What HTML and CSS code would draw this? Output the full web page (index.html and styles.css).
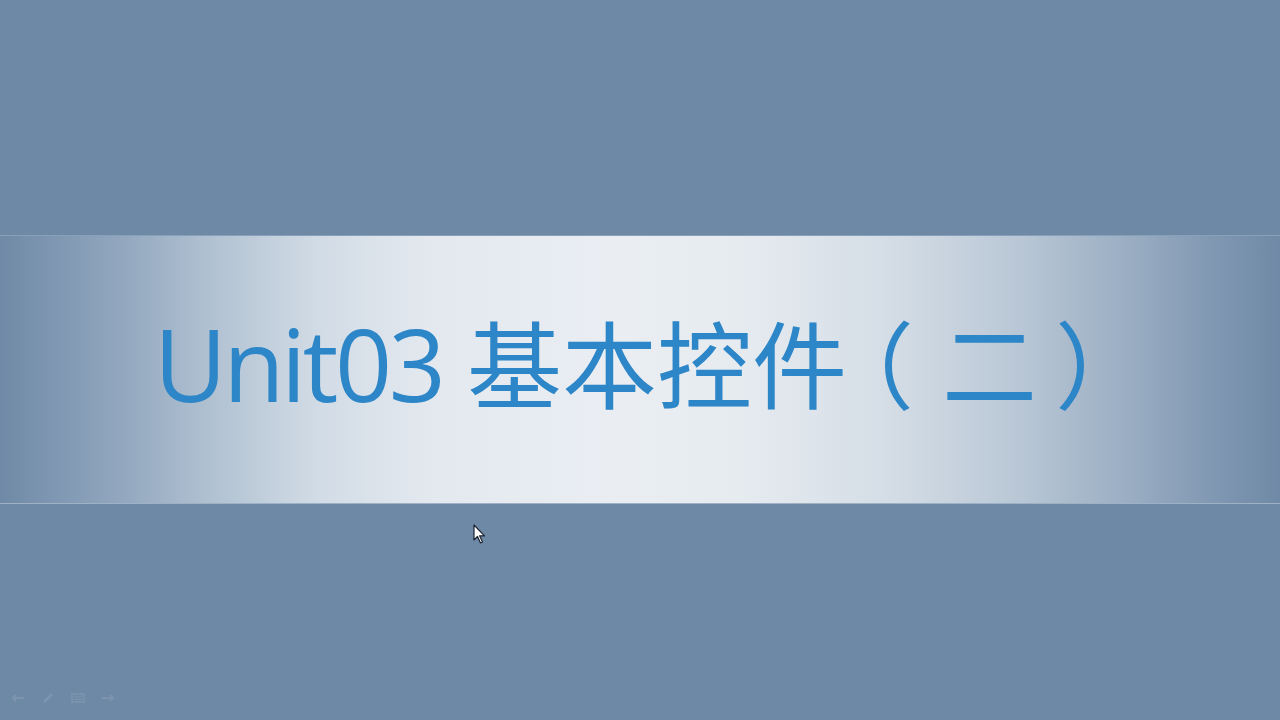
FILE: index.html
```html
<html>
<meta http-equiv="Content-Type" content="text/html; charset=utf-8" />

<head>
    <link rel="stylesheet" href="styles.css">
</head>

<body>
    <div id="slide">
        <div class="band">
            <h1 class="title"><span class="lat">Unit03</span> 基本控<span class="tight">件</span><span class="pl">（</span>二<span class="pr">）</span></h1>
        </div>

        <!-- 鼠标指针 -->
        <svg class="cursor" width="14" height="20" viewBox="0 0 14 20">
            <path d="M1 1 L1 16 L4.5 12.5 L7.5 19 L9.5 18 L6.6 11.8 L11.5 11.8 Z" fill="#fff" stroke="#1c2430" stroke-width="1.2" stroke-linejoin="round" />
        </svg>

        <!-- 放映工具栏 -->
        <div class="toolbar">
            <svg width="16" height="10" viewBox="0 0 16 10"><path d="M14 5 L3 5 M6 2 L3 5 L6 8" stroke="#8ea3bb" stroke-width="2" fill="none" /></svg>
            <svg width="16" height="10" viewBox="0 0 16 10"><path d="M4 9 L12 1" stroke="#8ea3bb" stroke-width="2.5" fill="none" /></svg>
            <svg width="16" height="10" viewBox="0 0 16 10"><rect x="2" y="1" width="12" height="8" fill="none" stroke="#8ea3bb" stroke-width="1.5" /><path d="M4 4 L12 4 M4 6.5 L12 6.5" stroke="#8ea3bb" stroke-width="1" /></svg>
            <svg width="16" height="10" viewBox="0 0 16 10"><path d="M2 5 L13 5 M10 2 L13 5 L10 8" stroke="#8ea3bb" stroke-width="2" fill="none" /></svg>
        </div>
    </div>
</body>

</html>
```

FILE: styles.css
```css
body,
div,
h1 {
    margin: 0px;
    padding: 0px;
}

body {
    background: #6e89a6;
    font-family: "Open Sans", "Noto Sans CJK SC", sans-serif;
    overflow: hidden;
}

#slide {
    width: 1280px;
    height: 720px;
    position: relative;
    padding-top: 235px;
    box-sizing: border-box;
}

.band {
    height: 269px;
    display: flex;
    align-items: center;
    justify-content: center;
    background: linear-gradient(to right,
        #6f89a6 0%,
        #7e96b1 4%,
        #94a9c0 10%,
        #b3c3d3 17%,
        #d2dce6 25%,
        #e4e9ef 34%,
        #eaeef3 48%,
        #e6ebf0 58%,
        #d3dce5 70%,
        #b8c6d5 80%,
        #97abc1 89%,
        #7c94af 96%,
        #6f89a6 100%);
    border-top: 1px solid #8aa0b8;
    border-bottom: 1px solid #9fb2c5;
    box-sizing: border-box;
}

.title {
    font-weight: normal;
    font-size: 95px;
    color: #2d86c7;
    line-height: 1;
    white-space: nowrap;
    padding-bottom: 13px;
    padding-left: 24px;
}

.title .lat {
    font-size: 100px;
    letter-spacing: -3.5px;
}

/* 全角括号留白比 Noto 宽，往左挪一点 */
.title .tight {
    letter-spacing: -28px;
}

.title .pl {
    letter-spacing: 28px;
}

.title .pr {
    margin-left: 18px;
}

.cursor {
    position: absolute;
    left: 473px;
    top: 524px;
}

.toolbar {
    position: absolute;
    left: 10px;
    top: 693px;
    display: flex;
    gap: 14px;
    opacity: 0.45;
}
```
